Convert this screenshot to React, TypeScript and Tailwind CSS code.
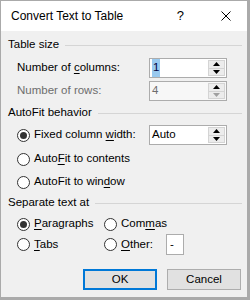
import type { ReactNode } from "react";

// small underlined access-key letter
function Key({ children }: { children: ReactNode }) {
  return <span className="underline decoration-1 underline-offset-[2px]">{children}</span>;
}

function Radio({ checked }: { checked?: boolean }) {
  return (
    <span className="flex h-[13px] w-[13px] shrink-0 items-center justify-center rounded-full border border-[#333333] bg-white">
      {checked && <span className="h-[7px] w-[7px] rounded-full bg-[#333333]" />}
    </span>
  );
}

function Arrow({ up, color = "#000000" }: { up?: boolean; color?: string }) {
  return (
    <svg width="7" height="4" viewBox="0 0 7 4">
      <path d={up ? "M3.5 0L7 4H0Z" : "M0 0H7L3.5 4Z"} fill={color} />
    </svg>
  );
}

function SpinBox({
  value,
  disabled,
  selected,
}: {
  value: string;
  disabled?: boolean;
  selected?: boolean;
}) {
  return (
    <div
      className={`flex h-5 w-[78px] items-stretch border border-[#acacac] ${
        disabled ? "bg-[#f7f7f7] text-[#6d6d6d]" : "bg-white text-black"
      }`}
    >
      <div className="flex flex-1 items-center pl-[2px]">
        {selected ? <span className="bg-[#99c9ef] px-px text-[#000040]">{value}</span> : <span>{value}</span>}
      </div>
      <div className="my-px mr-px flex w-[17px] flex-col border border-[#d4d4d4]">
        <div className="flex flex-1 items-center justify-center border-b border-[#d4d4d4] bg-[#ececec]">
          <Arrow up />
        </div>
        <div className="flex flex-1 items-center justify-center bg-[#ececec]">
          <Arrow color={disabled ? "#a0a0a0" : "#000000"} />
        </div>
      </div>
    </div>
  );
}

function GroupHeader({ title, className }: { title: string; className: string }) {
  return (
    <div className={`flex h-4 items-center pl-[7px] pr-[5px] ${className}`}>
      <span>{title}</span>
      <div className="ml-[6px] h-px flex-1 bg-[#d5d5d5]" />
    </div>
  );
}

function RadioLabel({ checked, children, width }: { checked?: boolean; children: ReactNode; width: string }) {
  return (
    <div className={`flex items-center gap-[4px] ${width}`}>
      <Radio checked={checked} />
      <span className="whitespace-nowrap">{children}</span>
    </div>
  );
}

export default function App() {
  return (
    <div className="h-[300px] w-[250px] bg-[#aaaaaa] pb-[3px] pl-px pr-[3px] pt-px font-['Liberation_Sans',Arial,sans-serif] text-[11.5px] text-black">
      <div className="flex h-full flex-col bg-[#f0f0f0]">
        {/* title bar */}
        <div className="flex h-[30px] items-center bg-white pl-[10px]">
          <span className="flex-1 text-[12px]">Convert Text to Table</span>
          <span className="mr-[37px] text-[13px]">?</span>
          <svg className="mr-[16px]" width="10" height="10" viewBox="0 0 10 10">
            <path d="M0.5 0.5L9.5 9.5M9.5 0.5L0.5 9.5" stroke="#000" strokeWidth="1" />
          </svg>
        </div>

        <GroupHeader title="Table size" className="mt-[6px]" />

        <div className="mt-[5px] flex h-5 items-center pl-4">
          <span className="w-[132px]">
            Number of <Key>c</Key>olumns:
          </span>
          <SpinBox value="1" selected />
        </div>
        <div className="mt-[3px] flex h-5 items-center pl-4">
          <span className="w-[132px] text-[#6d6d6d]">Number of rows:</span>
          <SpinBox value="4" disabled />
        </div>

        <GroupHeader title="AutoFit behavior" className="mt-[4px]" />

        <div className="mt-[4px] flex h-5 items-center pl-4">
          <RadioLabel checked width="w-[132px]">
            Fixed column <Key>w</Key>idth:
          </RadioLabel>
          <SpinBox value="Auto" />
        </div>
        <div className="mt-[4px] flex h-5 items-center pl-4">
          <RadioLabel width="w-[132px]">
            Auto<Key>F</Key>it to contents
          </RadioLabel>
        </div>
        <div className="mt-[3px] flex h-5 items-center pl-4">
          <RadioLabel width="w-[132px]">
            AutoFit to win<Key>d</Key>ow
          </RadioLabel>
        </div>

        <GroupHeader title="Separate text at" className="mt-[3px]" />

        <div className="mt-[3px] flex h-5 items-center pl-4">
          <RadioLabel checked width="w-[87px]">
            <Key>P</Key>aragraphs
          </RadioLabel>
          <RadioLabel width="">
            Com<Key>m</Key>as
          </RadioLabel>
        </div>
        <div className="flex h-[21px] items-center pl-4">
          <RadioLabel width="w-[87px]">
            <Key>T</Key>abs
          </RadioLabel>
          <RadioLabel width="w-[62px]">
            <Key>O</Key>ther:
          </RadioLabel>
          <div className="flex h-[21px] w-[18px] items-center border border-[#acacac] bg-white pl-[3px]">-</div>
        </div>

        <div className="mt-[14px] flex justify-end gap-[10px] pr-[6px]">
          <button className="flex h-[21px] w-[74px] items-center justify-center border-2 border-[#0078d7] bg-[#e1e1e1]">
            OK
          </button>
          <button className="flex h-[21px] w-[74px] items-center justify-center border border-[#adadad] bg-[#e1e1e1]">
            Cancel
          </button>
        </div>
      </div>
    </div>
  );
}
